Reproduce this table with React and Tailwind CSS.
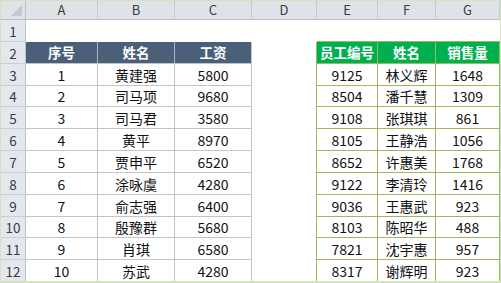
import React from 'react';

const colWidths = [72, 77, 77, 65, 61, 58, 64];
const colLetters = ['A', 'B', 'C', 'D', 'E', 'F', 'G'];
const rowHeights = [22, 22, 22, 21, 22, 22, 22, 22, 22, 21, 22, 22];

const salary = [
  ['1', '黄建强', '5800'],
  ['2', '司马项', '9680'],
  ['3', '司马君', '3580'],
  ['4', '黄平', '8970'],
  ['5', '贾申平', '6520'],
  ['6', '涂咏虞', '4280'],
  ['7', '俞志强', '6400'],
  ['8', '殷豫群', '5680'],
  ['9', '肖琪', '6580'],
  ['10', '苏武', '4280'],
];

const sales = [
  ['9125', '林义辉', '1648'],
  ['8504', '潘千慧', '1309'],
  ['9108', '张琪琪', '861'],
  ['8105', '王静浩', '1056'],
  ['8652', '许惠美', '1768'],
  ['9122', '李清玲', '1416'],
  ['9036', '王惠武', '923'],
  ['8103', '陈昭华', '488'],
  ['7821', '沈宇惠', '957'],
  ['8317', '谢辉明', '923'],
];

const font = { fontFamily: '"Microsoft YaHei", "Noto Sans CJK SC", "Noto Sans", sans-serif' };

const Cell = ({ row, col }) => {
  const w = colWidths[col];
  let text = '';
  let cls = 'text-[#111] text-[14px] pt-[1px]';
  let border = '';

  if (row === 1) {
    // header row
    if (col <= 2) {
      text = ['序号', '姓名', '工资'][col];
      cls = 'bg-[#4a6078] text-white text-[13.5px] font-bold';
      border = col < 2 ? 'border-r border-r-[#aab5c3]' : 'border-r border-r-[#c4c4c4]';
    } else if (col === 3) {
      border = 'border-r border-r-[#9bbb59]';
    } else {
      text = ['员工编号', '姓名', '销售量'][col - 4];
      cls = 'bg-[#00b050] text-white text-[13.5px] font-bold';
      border = 'border-r border-r-[#9bbb59]';
    }
  } else if (row >= 2) {
    const i = row - 2;
    if (col <= 2) {
      text = salary[i][col];
      border = 'border-r border-b border-[#c4c4c4]';
    } else if (col === 3) {
      border = 'border-r border-r-[#9bbb59]';
    } else {
      text = sales[i][col - 4];
      border = 'border-r border-b border-[#9bbb59]';
    }
  } else {
    // sheet row 1 is empty
    if (col >= 4) border = 'border-b border-b-[#9bbb59]';
  }

  if (row === 1 && col <= 2) border += ' border-b border-b-[#c4c4c4]';
  if (row === 1 && col >= 4) border += ' border-b border-b-[#9bbb59]';

  return (
    <div
      className={`flex items-center justify-center shrink-0 box-border ${cls} ${border}`}
      style={{ width: w }}
    >
      {text}
    </div>
  );
};

export default function App() {
  return (
    <div
      className="w-[501px] h-[283px] bg-white overflow-hidden border-t border-l border-r border-b-2 border-[#d4e2bd] box-border"
      style={font}
    >
      {/* Column headers */}
      <div className="flex h-[19px] bg-[#dfe3e8] border-b border-[#b8c0ca]">
        <div className="w-[25px] shrink-0 border-r border-[#b8c0ca] relative">
          <svg className="absolute right-[3px] bottom-[3px]" width="11" height="11" viewBox="0 0 11 11">
            <polygon points="11,0 11,11 0,11" fill="#c3c8cf" />
          </svg>
        </div>
        {colLetters.map((c, i) => (
          <div
            key={c}
            className="flex items-center justify-center shrink-0 border-r border-[#c3cad3] text-[13px] text-[#3b3b3b] box-border"
            style={{ width: colWidths[i] }}
          >
            {c}
          </div>
        ))}
      </div>

      {rowHeights.map((h, r) => (
        <div key={r} className="flex" style={{ height: h }}>
          <div className="w-[25px] shrink-0 flex items-center justify-center pt-[1px] bg-[#e4e8ee] border-r border-b border-r-[#b8c0ca] border-b-[#c8ced6] text-[13.5px] text-[#3b3b3b] box-border">
            {r + 1}
          </div>
          {colWidths.map((_, c) => (
            <Cell key={c} row={r} col={c} />
          ))}
        </div>
      ))}
    </div>
  );
}
